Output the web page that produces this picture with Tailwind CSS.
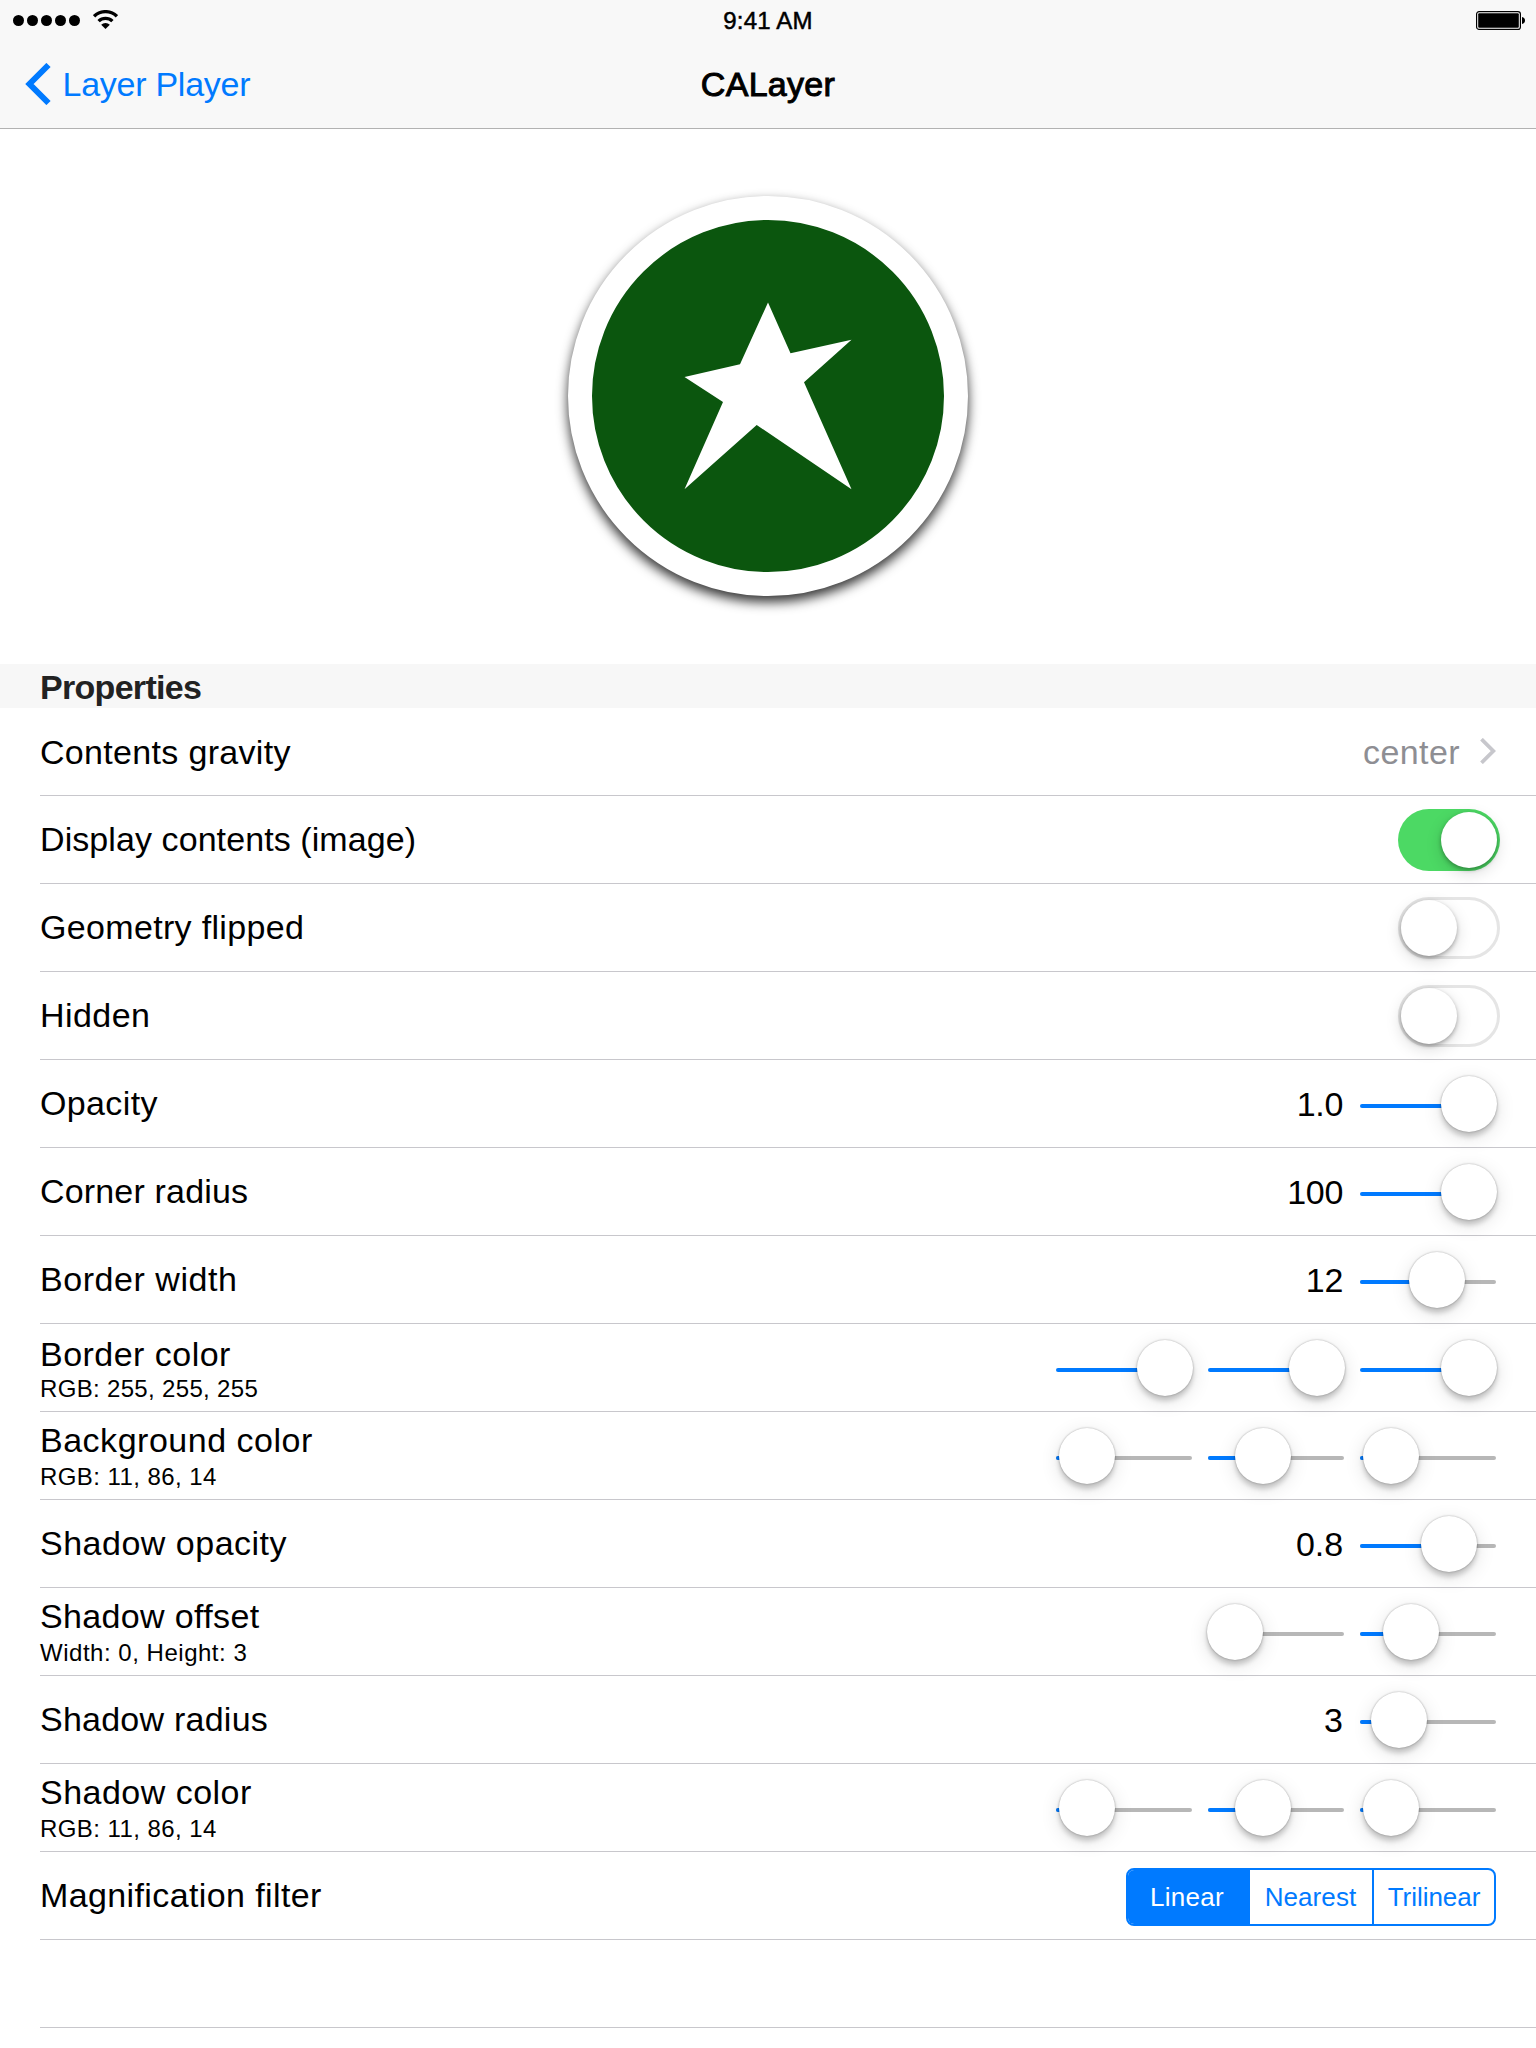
<!DOCTYPE html>
<html lang="en">
<head>
<meta charset="utf-8">
<title>CALayer</title>
<script src="https://cdn.jsdelivr.net/npm/@tailwindcss/browser@4"></script>
</head>
<body class="h-[2048px] w-[1536px] overflow-hidden bg-white font-['Liberation_Sans',Arial,sans-serif] text-[34px] leading-10 text-black">

<!-- Status and navigation bars -->
<header class="h-[129px] border-b border-[#b2b2b2] bg-[#f8f8f8]">
  <div class="grid h-10 grid-cols-3 pt-[7px]">
    <div class="flex gap-[13px] pl-[13px]">
      <svg class="mt-2 h-[11px] w-[67px]" viewBox="0 0 67 11"><circle cx="5.5" cy="5.5" r="5.5"/><circle cx="19.5" cy="5.5" r="5.5"/><circle cx="33.5" cy="5.5" r="5.5"/><circle cx="47.5" cy="5.5" r="5.5"/><circle cx="61.5" cy="5.5" r="5.5"/></svg>
      <svg class="mt-[3px] h-[19px] w-[25px]" viewBox="0 0 25 19"><path d="M1.1 6.300a16.2 16.2 0 0 1 22.800 0M5.600 11.200a9.800 9.800 0 0 1 13.800 0" fill="none" stroke="#000" stroke-width="3.300"/><path d="M12.500 19 8.200 14.700a6 6 0 0 1 8.600 0Z"/></svg>
    </div>
    <div class="text-center text-2xl leading-7 tracking-[0.19px] [-webkit-text-stroke:0.5px_black]">9:41 AM</div>
    <div class="flex justify-end pr-[10px]">
      <svg class="mt-1 h-[19px] w-[50px]" viewBox="0 0 50 19"><rect x=".6" y=".6" width="43.8" height="17.8" rx="2.500" fill="#fff" stroke="#000" stroke-width="1.200"/><rect x="2.200" y="2.200" width="40.600" height="14.600" rx="1"/><path d="M46 6c2 .4 3 1.600 3 3.500S48 12.600 46 13Z"/></svg>
    </div>
  </div>
  <nav class="grid h-[88px] grid-cols-3 items-center">
    <a class="flex items-center gap-[12px] pl-[24.500px] tracking-[-0.26px] text-[#007aff]">
      <svg class="h-[42px] w-[26px]" viewBox="24.500 63 26 42"><path d="M48 65 29 84l19 19" fill="none" stroke="#007aff" stroke-width="6"/></svg>
      <span>Layer Player</span>
    </a>
    <h1 class="text-center tracking-[0.3px] [-webkit-text-stroke:1px_black]">CALayer</h1>
  </nav>
</header>

<!-- Layer preview -->
<section class="flex h-[535px] justify-center pt-[67px]">
  <div class="size-[400px] rounded-full border-[24px] border-white bg-[#0b560e] shadow-[0_6px_12px_rgba(0,0,0,0.8)]">
    <svg class="size-[352px]" viewBox="24 24 352 352"><path fill="#fff" d="M200 106.500 222.500 157.300 283.500 143.800 236 186.300 283.500 293.200 188.700 229 116.500 293.200 155 206 116.500 181 172 168.300Z"/></svg>
  </div>
</section>

<h2 class="h-11 bg-[#f7f7f7] pl-10 pt-[3px] font-bold tracking-[-0.7px] text-[#222]">Properties</h2>

<main class="pl-10">
  <div class="flex h-[88px] justify-between border-b border-[#c8c7cc] pr-10 pt-6">
    <span class="tracking-[0.32px]">Contents gravity</span>
    <span class="flex gap-5 tracking-[0.4px] text-[#8e8e93]">center
      <svg class="mt-1.5 h-[26px] w-4" viewBox="1480 738 16 26"><path d="M1481.500 739.200 1493.300 751l-11.800 11.800" fill="none" stroke="#c7c7cc" stroke-width="3.800"/></svg>
    </span>
  </div>

  <div class="flex h-[88px] justify-between border-b border-[#c8c7cc] pr-9">
    <span class="pt-[23px] tracking-[0.08px]">Display contents (image)</span>
    <div class="mt-[13px] flex h-[62px] w-[102px] justify-end rounded-full bg-[#4cd964] p-[3px]"><div class="size-[56px] rounded-full bg-white shadow-[0_5px_16px_rgba(0,0,0,0.15),0_2px_4px_rgba(0,0,0,0.3)]"></div></div>
  </div>

  <div class="flex h-[88px] justify-between border-b border-[#c8c7cc] pr-9">
    <span class="pt-[23px] tracking-[0.33px]">Geometry flipped</span>
    <div class="mt-[13px] h-[62px] w-[102px] rounded-full border-[3px] border-[#e5e5e5]"><div class="size-[56px] rounded-full bg-white shadow-[0_5px_16px_rgba(0,0,0,0.15),0_2px_4px_rgba(0,0,0,0.3)]"></div></div>
  </div>

  <div class="flex h-[88px] justify-between border-b border-[#c8c7cc] pr-9">
    <span class="pt-[23px] tracking-[0.45px]">Hidden</span>
    <div class="mt-[13px] h-[62px] w-[102px] rounded-full border-[3px] border-[#e5e5e5]"><div class="size-[56px] rounded-full bg-white shadow-[0_5px_16px_rgba(0,0,0,0.15),0_2px_4px_rgba(0,0,0,0.3)]"></div></div>
  </div>

  <div class="flex h-[88px] justify-between border-b border-[#c8c7cc] pr-10">
    <span class="pt-[23px] tracking-[0.37px]">Opacity</span>
    <div class="flex gap-[17px]">
      <span class="pt-6 tracking-[-0.3px]">1.0</span>
      <div class="relative mt-11 h-1 w-[136px] rounded-full bg-[#007aff]"><div class="absolute -top-7 left-[81px] size-[56px] rounded-full bg-white shadow-[0_0_2px_rgba(0,0,0,0.35),0_5px_5px_rgba(0,0,0,0.18),0_5px_20px_rgba(0,0,0,0.12)]"></div></div>
    </div>
  </div>

  <div class="flex h-[88px] justify-between border-b border-[#c8c7cc] pr-10">
    <span class="pt-[23px] tracking-[0.17px]">Corner radius</span>
    <div class="flex gap-[17px]">
      <span class="pt-6 tracking-[-0.3px]">100</span>
      <div class="relative mt-11 h-1 w-[136px] rounded-full bg-[#007aff]"><div class="absolute -top-7 left-[81px] size-[56px] rounded-full bg-white shadow-[0_0_2px_rgba(0,0,0,0.35),0_5px_5px_rgba(0,0,0,0.18),0_5px_20px_rgba(0,0,0,0.12)]"></div></div>
    </div>
  </div>

  <div class="flex h-[88px] justify-between border-b border-[#c8c7cc] pr-10">
    <span class="pt-[23px] tracking-[0.55px]">Border width</span>
    <div class="flex gap-[17px]">
      <span class="pt-6 tracking-[-0.3px]">12</span>
      <div class="relative mt-11 h-1 w-[136px] rounded-full bg-[#b7b7b7]"><div class="h-1 w-[77px] rounded-l-full bg-[#007aff]"></div><div class="absolute -top-7 left-[49px] size-[56px] rounded-full bg-white shadow-[0_0_2px_rgba(0,0,0,0.35),0_5px_5px_rgba(0,0,0,0.18),0_5px_20px_rgba(0,0,0,0.12)]"></div></div>
    </div>
  </div>

  <div class="flex h-[88px] justify-between border-b border-[#c8c7cc] pr-10">
    <div class="flex flex-col gap-px pt-2.5">
      <span class="tracking-[0.47px]">Border color</span>
      <span class="text-2xl leading-7 tracking-[0.33px]">RGB: 255, 255, 255</span>
    </div>
    <div class="flex gap-4">
      <div class="relative mt-11 h-1 w-[136px] rounded-full bg-[#007aff]"><div class="absolute -top-7 left-[81px] size-[56px] rounded-full bg-white shadow-[0_0_2px_rgba(0,0,0,0.35),0_5px_5px_rgba(0,0,0,0.18),0_5px_20px_rgba(0,0,0,0.12)]"></div></div>
      <div class="relative mt-11 h-1 w-[136px] rounded-full bg-[#007aff]"><div class="absolute -top-7 left-[81px] size-[56px] rounded-full bg-white shadow-[0_0_2px_rgba(0,0,0,0.35),0_5px_5px_rgba(0,0,0,0.18),0_5px_20px_rgba(0,0,0,0.12)]"></div></div>
      <div class="relative mt-11 h-1 w-[136px] rounded-full bg-[#007aff]"><div class="absolute -top-7 left-[81px] size-[56px] rounded-full bg-white shadow-[0_0_2px_rgba(0,0,0,0.35),0_5px_5px_rgba(0,0,0,0.18),0_5px_20px_rgba(0,0,0,0.12)]"></div></div>
    </div>
  </div>

  <div class="flex h-[88px] justify-between border-b border-[#c8c7cc] pr-10">
    <div class="flex flex-col gap-[3px] pt-2">
      <span class="tracking-[0.51px]">Background color</span>
      <span class="text-2xl leading-7 tracking-[0.43px]">RGB: 11, 86, 14</span>
    </div>
    <div class="flex gap-4">
      <div class="relative mt-11 h-1 w-[136px] rounded-full bg-[#b7b7b7]"><div class="h-1 w-[31px] rounded-l-full bg-[#007aff]"></div><div class="absolute -top-7 left-[3px] size-[56px] rounded-full bg-white shadow-[0_0_2px_rgba(0,0,0,0.35),0_5px_5px_rgba(0,0,0,0.18),0_5px_20px_rgba(0,0,0,0.12)]"></div></div>
      <div class="relative mt-11 h-1 w-[136px] rounded-full bg-[#b7b7b7]"><div class="h-1 w-[55px] rounded-l-full bg-[#007aff]"></div><div class="absolute -top-7 left-[27px] size-[56px] rounded-full bg-white shadow-[0_0_2px_rgba(0,0,0,0.35),0_5px_5px_rgba(0,0,0,0.18),0_5px_20px_rgba(0,0,0,0.12)]"></div></div>
      <div class="relative mt-11 h-1 w-[136px] rounded-full bg-[#b7b7b7]"><div class="h-1 w-[31px] rounded-l-full bg-[#007aff]"></div><div class="absolute -top-7 left-[3px] size-[56px] rounded-full bg-white shadow-[0_0_2px_rgba(0,0,0,0.35),0_5px_5px_rgba(0,0,0,0.18),0_5px_20px_rgba(0,0,0,0.12)]"></div></div>
    </div>
  </div>

  <div class="flex h-[88px] justify-between border-b border-[#c8c7cc] pr-10">
    <span class="pt-[23px] tracking-[0.5px]">Shadow opacity</span>
    <div class="flex gap-[17px]">
      <span class="pt-6 tracking-[-0.1px]">0.8</span>
      <div class="relative mt-11 h-1 w-[136px] rounded-full bg-[#b7b7b7]"><div class="h-1 w-[89px] rounded-l-full bg-[#007aff]"></div><div class="absolute -top-7 left-[61px] size-[56px] rounded-full bg-white shadow-[0_0_2px_rgba(0,0,0,0.35),0_5px_5px_rgba(0,0,0,0.18),0_5px_20px_rgba(0,0,0,0.12)]"></div></div>
    </div>
  </div>

  <div class="flex h-[88px] justify-between border-b border-[#c8c7cc] pr-10">
    <div class="flex flex-col gap-[3px] pt-2">
      <span class="tracking-[0.36px]">Shadow offset</span>
      <span class="text-2xl leading-7 tracking-[0.52px]">Width: 0, Height: 3</span>
    </div>
    <div class="flex gap-4">
      <div class="relative mt-11 h-1 w-[136px] rounded-full bg-[#b7b7b7]"><div class="absolute -top-7 -left-px size-[56px] rounded-full bg-white shadow-[0_0_2px_rgba(0,0,0,0.35),0_5px_5px_rgba(0,0,0,0.18),0_5px_20px_rgba(0,0,0,0.12)]"></div></div>
      <div class="relative mt-11 h-1 w-[136px] rounded-full bg-[#b7b7b7]"><div class="h-1 w-[51px] rounded-l-full bg-[#007aff]"></div><div class="absolute -top-7 left-[23px] size-[56px] rounded-full bg-white shadow-[0_0_2px_rgba(0,0,0,0.35),0_5px_5px_rgba(0,0,0,0.18),0_5px_20px_rgba(0,0,0,0.12)]"></div></div>
    </div>
  </div>

  <div class="flex h-[88px] justify-between border-b border-[#c8c7cc] pr-10">
    <span class="pt-[23px] tracking-[0.24px]">Shadow radius</span>
    <div class="flex gap-[17px]">
      <span class="pt-6">3</span>
      <div class="relative mt-11 h-1 w-[136px] rounded-full bg-[#b7b7b7]"><div class="h-1 w-[39px] rounded-l-full bg-[#007aff]"></div><div class="absolute -top-7 left-[11px] size-[56px] rounded-full bg-white shadow-[0_0_2px_rgba(0,0,0,0.35),0_5px_5px_rgba(0,0,0,0.18),0_5px_20px_rgba(0,0,0,0.12)]"></div></div>
    </div>
  </div>

  <div class="flex h-[88px] justify-between border-b border-[#c8c7cc] pr-10">
    <div class="flex flex-col gap-[3px] pt-2">
      <span class="tracking-[0.48px]">Shadow color</span>
      <span class="text-2xl leading-7 tracking-[0.43px]">RGB: 11, 86, 14</span>
    </div>
    <div class="flex gap-4">
      <div class="relative mt-11 h-1 w-[136px] rounded-full bg-[#b7b7b7]"><div class="h-1 w-[31px] rounded-l-full bg-[#007aff]"></div><div class="absolute -top-7 left-[3px] size-[56px] rounded-full bg-white shadow-[0_0_2px_rgba(0,0,0,0.35),0_5px_5px_rgba(0,0,0,0.18),0_5px_20px_rgba(0,0,0,0.12)]"></div></div>
      <div class="relative mt-11 h-1 w-[136px] rounded-full bg-[#b7b7b7]"><div class="h-1 w-[55px] rounded-l-full bg-[#007aff]"></div><div class="absolute -top-7 left-[27px] size-[56px] rounded-full bg-white shadow-[0_0_2px_rgba(0,0,0,0.35),0_5px_5px_rgba(0,0,0,0.18),0_5px_20px_rgba(0,0,0,0.12)]"></div></div>
      <div class="relative mt-11 h-1 w-[136px] rounded-full bg-[#b7b7b7]"><div class="h-1 w-[31px] rounded-l-full bg-[#007aff]"></div><div class="absolute -top-7 left-[3px] size-[56px] rounded-full bg-white shadow-[0_0_2px_rgba(0,0,0,0.35),0_5px_5px_rgba(0,0,0,0.18),0_5px_20px_rgba(0,0,0,0.12)]"></div></div>
    </div>
  </div>

  <div class="flex h-[88px] justify-between border-b border-[#c8c7cc] pr-10">
    <span class="pt-[23px] tracking-[0.385px]">Magnification filter</span>
    <div class="mt-4 flex h-[58px] w-[370px] overflow-hidden rounded-lg border-2 border-[#007aff] text-center text-[26px] leading-[54px] text-[#007aff]">
      <span class="w-[122px] bg-[#007aff] pr-1 tracking-[0.27px] text-white">Linear</span>
      <span class="w-[124px] border-r-2 border-[#007aff] pr-px tracking-[0.08px]">Nearest</span>
      <span class="w-[120px] tracking-[-0.04px]">Trilinear</span>
    </div>
  </div>

  <div class="h-[88px] border-b border-[#c8c7cc]"></div>
</main>
</body>
</html>
